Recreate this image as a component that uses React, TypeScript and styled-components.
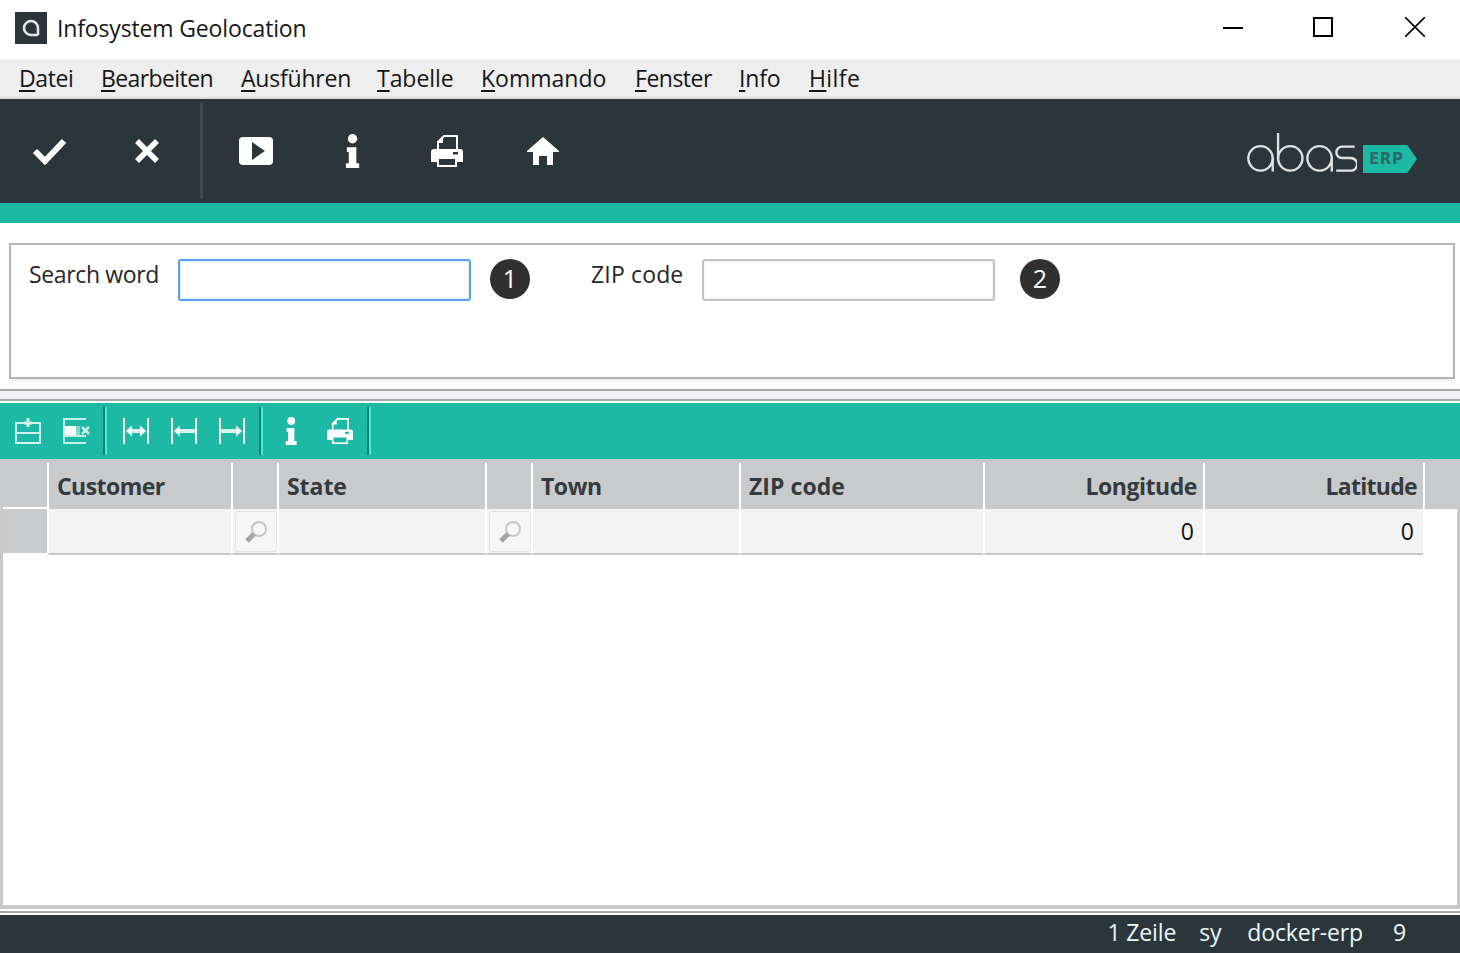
import React from "react";
import styled, { createGlobalStyle } from "styled-components";

const GlobalStyle = createGlobalStyle`
  html, body {
    margin: 0;
    padding: 0;
    background: #fff;
  }
  * {
    box-sizing: border-box;
  }
  body {
    font-family: "Open Sans", "Noto Sans", "DejaVu Sans", sans-serif;
    color: #1c1c1c;
  }
`;

const Window = styled.div`
  width: 1460px;
  height: 953px;
  display: flex;
  flex-direction: column;
  overflow: hidden;
  background: #fff;
`;

const TitleBar = styled.div`
  height: 59px;
  flex: none;
  display: flex;
  align-items: center;
  padding: 0 35px 6px 15px;
`;

const AppIcon = styled.div`
  width: 32px;
  height: 32px;
  flex: none;
  margin: 2px 10px 0 0;
  background: #2b363c;
  display: flex;
  align-items: center;
  justify-content: center;
`;

const Title = styled.div`
  flex: 1;
  margin-top: 2px;
  font-size: 23px;
  letter-spacing: -0.15px;
  color: #161616;
`;

const WindowButtons = styled.div`
  display: flex;
  align-items: center;
  gap: 70px;
`;

const CloseGlyph = styled.svg`
  margin-left: 2px;
`;

const MenuBar = styled.div`
  height: 40px;
  flex: none;
  display: flex;
  align-items: center;
  padding-left: 19px;
  background: #eeeeee;
  border-bottom: 2px solid #dcdcdc;
`;

const MenuItem = styled.div<{ $width: number; $tracking: number }>`
  width: ${p => p.$width}px;
  flex: none;
  font-size: 23px;
  letter-spacing: ${p => p.$tracking}px;
  white-space: nowrap;
  color: #161616;

  u {
    text-underline-offset: 3px;
    text-decoration-thickness: 2px;
  }
`;

const MainToolbar = styled.div`
  height: 104px;
  flex: none;
  display: flex;
  align-items: flex-start;
  padding: 4px 43px 0 0;
  background: #2b363c;
`;

const ToolGroup = styled.div<{ $width: number }>`
  width: ${p => p.$width}px;
  height: 96px;
  flex: none;
  display: flex;
  align-items: center;
`;

const ToolDivider = styled.div`
  width: 3px;
  height: 96px;
  flex: none;
  background: #3d484e;
`;

const ToolSlot = styled.div<{ $width: number }>`
  width: ${p => p.$width}px;
  flex: none;
  display: flex;
  justify-content: center;
`;

const Logo = styled.div`
  margin-left: auto;
  height: 70px;
  display: flex;
  align-items: flex-end;
`;

const ErpBadge = styled.div`
  width: 54px;
  height: 28px;
  margin-left: 6px;
  padding-left: 6px;
  background: #1cbaa4;
  clip-path: polygon(0 0, 82% 0, 100% 50%, 82% 100%, 0 100%);
  font-family: "DejaVu Sans", sans-serif;
  font-size: 15px;
  font-weight: 700;
  letter-spacing: 0.6px;
  line-height: 28px;
  color: #2b6a68;
`;

const AccentBar = styled.div`
  height: 20px;
  flex: none;
  background: #1cbaa4;
`;

const FormArea = styled.div`
  height: 166px;
  flex: none;
  padding: 20px 5px 10px 9px;
`;

const FieldSet = styled.div`
  height: 136px;
  display: flex;
  align-items: flex-start;
  padding: 14px 0 0 18px;
  border: 2px solid #b4b4b4;
  box-shadow: 0 2px 0 #f0f0f0;
`;

const FieldLabel = styled.div<{ $width: number; $tracking: number }>`
  width: ${p => p.$width}px;
  flex: none;
  font-size: 23px;
  line-height: 30px;
  letter-spacing: ${p => p.$tracking}px;
  color: #262626;
`;

const TextBox = styled.div<{ $focused?: boolean }>`
  width: 293px;
  height: 42px;
  flex: none;
  border-radius: 3px;
  background: #fff;
  border: 2px solid ${p => (p.$focused ? "#5ba2ee" : "#c3c3c3")};
  box-shadow: inset 0 0 0 1px ${p => (p.$focused ? "#e2edf9" : "#f2f2f2")};
`;

const Callout = styled.div<{ $left: number; $right: number }>`
  width: 40px;
  height: 40px;
  flex: none;
  margin-left: ${p => p.$left}px;
  margin-right: ${p => p.$right}px;
  border-radius: 50%;
  background: #303030;
  color: #fff;
  font-size: 25px;
  line-height: 38px;
  text-align: center;
`;

const Splitter = styled.div`
  height: 12px;
  flex: none;
  margin-bottom: 2px;
  background: #f0f0f5;
  border-top: 2px solid #a7a7ab;
  border-bottom: 2px solid #a7a7ab;
`;

const TableToolbar = styled.div`
  height: 56px;
  flex: none;
  display: flex;
  align-items: center;
  padding-left: 13px;
  background: #1cbaa4;
`;

const SmallGroup = styled.div<{ $left: number; $right: number; $gap: number }>`
  display: flex;
  align-items: center;
  gap: ${p => p.$gap}px;
  padding: 0 ${p => p.$right}px 0 ${p => p.$left}px;
`;

const SmallDivider = styled.div`
  width: 4px;
  height: 48px;
  flex: none;
  border-left: 2px solid #0f8070;
  border-right: 2px solid #3ff0d4;
`;

const GridFrame = styled.div`
  flex: 1;
  min-height: 0;
  display: flex;
  flex-direction: column;
  border-left: 3px solid #c9c9c9;
  border-right: 3px solid #c9c9c9;
  border-bottom: 4px solid #c9c9c9;
`;

const HeaderRow = styled.div`
  height: 50px;
  flex: none;
  display: flex;
  margin: 0 -3px;
  padding-left: 3px;
  background: #c9cacc;
`;

const DataRow = styled.div`
  height: 46px;
  flex: none;
  display: flex;
`;

const CornerCell = styled.div`
  width: 44px;
  flex: none;
`;

const RowHead = styled.div`
  width: 44px;
  height: 46px;
  flex: none;
  margin-top: -2px;
  border-top: 2px solid #fff;
  background: #c9cacc;
`;

const HeadCell = styled.div<{ $width: number; $right?: boolean; $tracking?: number }>`
  width: ${p => p.$width}px;
  height: 46px;
  margin-top: 4px;
  flex: none;
  padding: 7px ${p => (p.$right ? 6 : 0)}px 0 ${p => (p.$right ? 0 : 8)}px;
  border-left: 2px solid #fff;
  text-align: ${p => (p.$right ? "right" : "left")};
  font-size: 23px;
  font-weight: 700;
  line-height: 32px;
  letter-spacing: ${p => p.$tracking ?? -0.45}px;
  color: #333a40;
`;

const EndCell = styled.div`
  width: 2px;
  height: 46px;
  margin-top: 4px;
  flex: none;
  background: #fff;
`;

const Cell = styled.div<{ $width: number }>`
  width: ${p => p.$width}px;
  height: 46px;
  flex: none;
  padding-right: 9px;
  display: flex;
  align-items: center;
  justify-content: flex-end;
  border-left: 2px solid #fff;
  border-bottom: 2px solid #c9c9c9;
  background: #f3f3f3;
  font-size: 23px;
  color: #111;
`;

const LookupCell = styled.div`
  width: 46px;
  height: 46px;
  flex: none;
  padding: 2px;
  border-left: 2px solid #fff;
  border-bottom: 2px solid #c9c9c9;
  background: #f3f3f3;
`;

const LookupButton = styled.div`
  width: 42px;
  height: 41px;
  display: flex;
  align-items: center;
  justify-content: center;
  border-radius: 3px;
  border: 1px solid #e2e2e2;
  background: #f6f6f6;
`;

const EmptyGrid = styled.div`
  flex: 1;
  background: #fff;
`;

const FooterLines = styled.div`
  height: 6px;
  flex: none;
  display: flex;
  align-items: center;
  background: #fff;

  &::before {
    content: "";
    flex: 1;
    height: 2px;
    background: #a7a7ab;
  }
`;

const StatusBar = styled.div`
  height: 38px;
  flex: none;
  display: flex;
  align-items: center;
  justify-content: flex-end;
  padding: 0 54px 4px 0;
  background: #2b363c;
  color: #eef6f8;
  font-size: 23px;
  letter-spacing: -0.15px;
`;

const StatusItem = styled.div<{ $gap: number }>`
  margin-left: ${p => p.$gap}px;
`;

const CheckIcon = () => (
  <svg width="36" height="28" viewBox="0 0 36 28">
    <path d="M3 14l10 10L32 4" fill="none" stroke="#fff" strokeWidth="6" />
  </svg>
);

const CrossIcon = () => (
  <svg width="26" height="26" viewBox="0 0 26 26">
    <path d="M3 3l20 20M23 3L3 23" fill="none" stroke="#fff" strokeWidth="5.5" />
  </svg>
);

const PlayIcon = () => (
  <svg width="36" height="30" viewBox="0 0 36 30">
    <rect x="1" y="1" width="34" height="28" rx="4" fill="#fff" />
    <path d="M14 6l13 9-13 9z" fill="#2b363c" />
  </svg>
);

const InfoIcon = ({ size = 34 }: { size?: number }) => (
  <svg width={(size * 16) / 36} height={size} viewBox="0 0 16 36">
    <circle cx="8" cy="5" r="5" fill="#fff" />
    <path d="M2 14h10v17h3v5H1v-5h3V19H2z" fill="#fff" />
  </svg>
);

const PrinterIcon = ({ bg = "#2b363c", size = 32 }: { bg?: string; size?: number }) => (
  <svg width={size} height={size} viewBox="0 0 32 32">
    <path d="M7 14V7l6-6h13v13" fill="none" stroke="#fff" strokeWidth="2" />
    <path d="M12 2v6H7z" fill="#fff" />
    <path d="M3 14h26a3 3 0 0 1 3 3v10h-6v5H6v-5H0V17a3 3 0 0 1 3-3z" fill="#fff" />
    <rect x="8" y="24" width="16" height="6" fill={bg} />
    <rect x="22" y="17" width="5" height="2.5" fill={bg} />
  </svg>
);

const HomeIcon = () => (
  <svg width="32" height="28" viewBox="0 0 32 28">
    <path d="M16 0L32 14v1h-6v13h-6V19h-8v9H6V15H0v-1z" fill="#fff" />
  </svg>
);

const SearchIcon = () => (
  <svg width="24" height="24" viewBox="0 0 24 24">
    <circle cx="15" cy="9" r="7" fill="none" stroke="#c6c6c6" strokeWidth="2" />
    <path d="M10 14L3 21" stroke="#a4a4a4" strokeWidth="5" />
  </svg>
);

const AddRowIcon = () => (
  <svg width="26" height="26" viewBox="0 0 26 26" fill="none" stroke="#d5f3ee" strokeWidth="2">
    <path d="M1 5h24v20H1zM1 15h24" />
    <path d="M13 0v9M9 5h8" strokeWidth="3" />
  </svg>
);

const RemoveRowIcon = () => (
  <svg width="28" height="26" viewBox="0 0 28 26" fill="none" stroke="#c5efe8" strokeWidth="2">
    <path d="M23 1H1v24h22M23 18H1" />
    <rect x="2" y="8" width="11" height="9" fill="#fff" stroke="none" />
    <rect x="13" y="8" width="4" height="9" fill="#7fd8ca" stroke="none" />
    <path d="M19 9l7 7M26 9l-7 7" strokeWidth="2.5" />
  </svg>
);

const WidthIcon = ({ mode }: { mode: "both" | "left" | "right" }) => {
  const shaft = mode === "both" ? "M8 13h10" : mode === "left" ? "M8 13h16" : "M2 13h16";
  return (
    <svg width="26" height="26" viewBox="0 0 26 26" fill="none">
      <path d="M1 0v26M25 0v26" stroke="#fff" strokeWidth="2" />
      <path d={shaft} stroke="#d7f4ef" strokeWidth="4" />
      {mode !== "right" && <path d="M3 13l6-5.5v11z" fill="#fff" />}
      {mode !== "left" && <path d="M23 13l-6-5.5v11z" fill="#fff" />}
    </svg>
  );
};

export default function App() {
  return (
    <Window>
      <GlobalStyle />
      <TitleBar>
        <AppIcon>
          <svg width="20" height="20" viewBox="0 0 20 20" fill="none">
            <path d="M17 17V10a7 7 0 1 0-7 7h7" stroke="#e4e6e6" strokeWidth="2.6" />
          </svg>
        </AppIcon>
        <Title>Infosystem Geolocation</Title>
        <WindowButtons>
          <svg width="20" height="20" viewBox="0 0 20 20">
            <path d="M0 11h20" stroke="#000" strokeWidth="2" />
          </svg>
          <svg width="20" height="20" viewBox="0 0 20 20">
            <rect x="1" y="1" width="18" height="18" fill="none" stroke="#000" strokeWidth="2" />
          </svg>
          <CloseGlyph width="20" height="20" viewBox="0 0 20 20">
            <path d="M0 0l20 20M20 0L0 20" stroke="#000" strokeWidth="1.6" />
          </CloseGlyph>
        </WindowButtons>
      </TitleBar>

      <MenuBar>
        <MenuItem $width={82} $tracking={-0.4}><u>D</u>atei</MenuItem>
        <MenuItem $width={140} $tracking={-0.6}><u>B</u>earbeiten</MenuItem>
        <MenuItem $width={136} $tracking={-0.2}><u>A</u>usführen</MenuItem>
        <MenuItem $width={104} $tracking={-0.05}><u>T</u>abelle</MenuItem>
        <MenuItem $width={154} $tracking={0}><u>K</u>ommando</MenuItem>
        <MenuItem $width={104} $tracking={-0.5}><u>F</u>enster</MenuItem>
        <MenuItem $width={70} $tracking={-0.2}><u>I</u>nfo</MenuItem>
        <MenuItem $width={60} $tracking={0.4}><u>H</u>ilfe</MenuItem>
      </MenuBar>

      <MainToolbar>
        <ToolGroup $width={200}>
          <ToolSlot $width={100}><CheckIcon /></ToolSlot>
          <ToolSlot $width={94}><CrossIcon /></ToolSlot>
        </ToolGroup>
        <ToolDivider />
        <ToolGroup $width={390}>
          <ToolSlot $width={106}><PlayIcon /></ToolSlot>
          <ToolSlot $width={87}><InfoIcon /></ToolSlot>
          <ToolSlot $width={102}><PrinterIcon /></ToolSlot>
          <ToolSlot $width={90}><HomeIcon /></ToolSlot>
        </ToolGroup>
        <Logo>
          <svg width="110" height="41" viewBox="0 0 112 42" fill="none" stroke="#e0e3e3" strokeWidth="2.4" role="img" aria-label="abas">
            <circle cx="13.5" cy="27" r="12.5" />
            <path d="M26 27v13.5" />
            <circle cx="44" cy="27" r="12.5" />
            <path d="M31.5 27V1" />
            <circle cx="74" cy="27" r="12.5" />
            <path d="M86.5 27v13.5" />
            <path d="M110 15H97a5.8 5.8 0 0 0 0 11.6h9a6.5 6.5 0 0 1 0 13H91" />
          </svg>
          <ErpBadge>ERP</ErpBadge>
        </Logo>
      </MainToolbar>
      <AccentBar />

      <FormArea>
        <FieldSet>
          <FieldLabel $width={149} $tracking={-0.35}>Search word</FieldLabel>
          <TextBox $focused />
          <Callout $left={19} $right={61}>1</Callout>
          <FieldLabel $width={111} $tracking={0.15}>ZIP code</FieldLabel>
          <TextBox />
          <Callout $left={25} $right={0}>2</Callout>
        </FieldSet>
      </FormArea>

      <Splitter />

      <TableToolbar>
        <SmallGroup $left={2} $right={12} $gap={22}>
          <AddRowIcon />
          <RemoveRowIcon />
        </SmallGroup>
        <SmallDivider />
        <SmallGroup $left={16} $right={14} $gap={22}>
          <WidthIcon mode="both" />
          <WidthIcon mode="left" />
          <WidthIcon mode="right" />
        </SmallGroup>
        <SmallDivider />
        <SmallGroup $left={22} $right={14} $gap={30}>
          <InfoIcon size={28} />
          <PrinterIcon bg="#1cbaa4" size={26} />
        </SmallGroup>
        <SmallDivider />
      </TableToolbar>

      <GridFrame>
        <HeaderRow>
          <CornerCell />
          <HeadCell $width={184} $tracking={-0.55}>Customer</HeadCell>
          <HeadCell $width={46} />
          <HeadCell $width={208} $tracking={-0.05}>State</HeadCell>
          <HeadCell $width={46} />
          <HeadCell $width={208}>Town</HeadCell>
          <HeadCell $width={244} $tracking={0.05}>ZIP code</HeadCell>
          <HeadCell $width={220} $right>Longitude</HeadCell>
          <HeadCell $width={220} $right $tracking={-0.7}>Latitude</HeadCell>
          <EndCell />
        </HeaderRow>
        <DataRow>
          <RowHead />
          <Cell $width={184} />
          <LookupCell><LookupButton><SearchIcon /></LookupButton></LookupCell>
          <Cell $width={208} />
          <LookupCell><LookupButton><SearchIcon /></LookupButton></LookupCell>
          <Cell $width={208} />
          <Cell $width={244} />
          <Cell $width={220}>0</Cell>
          <Cell $width={220}>0</Cell>
        </DataRow>
        <EmptyGrid />
      </GridFrame>
      <FooterLines />
      <StatusBar>
        <StatusItem $gap={0}>1 Zeile</StatusItem>
        <StatusItem $gap={23}>sy</StatusItem>
        <StatusItem $gap={26}>docker-erp</StatusItem>
        <StatusItem $gap={30}>9</StatusItem>
      </StatusBar>
    </Window>
  );
}
